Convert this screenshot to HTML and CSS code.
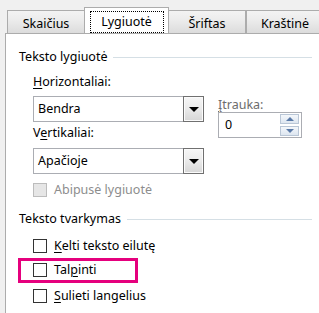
FILE: index.html
```html
<!DOCTYPE html>
<html>
  <head>
    <title>Lygiuotė</title>
    <link rel="stylesheet" href="styles.css">
  </head>
  <body>
    <div class="tabs">
      <div class="tab">Skaičius</div>
      <div class="tab tab-active"><span class="focus-box">Lygiuotė</span></div>
      <div class="tab">Šriftas</div>
      <div class="tab tab-last">Kraštinė</div>
    </div>
    <div class="panel">
      <div class="group-title">
        <span>Teksto lygiuotė</span>
        <div class="group-line"></div>
      </div>
      <div class="align-grid">
        <div class="align-left">
          <div class="label label-first"><u>H</u>orizontaliai:</div>
          <div class="combo">
            <span class="combo-text">Bendra</span>
            <div class="combo-button"><div class="arrow-down"></div></div>
          </div>
          <div class="label label-second">V<u>e</u>rtikaliai:</div>
          <div class="combo combo-second">
            <span class="combo-text">Apačioje</span>
            <div class="combo-button"><div class="arrow-down"></div></div>
          </div>
        </div>
        <div class="align-right">
          <div class="label label-disabled"><u>Į</u>trauka:</div>
          <div class="spin">
            <span class="spin-text">0</span>
            <div class="spin-buttons">
              <div class="spin-btn"><div class="spin-up"></div></div>
              <div class="spin-btn"><div class="spin-down"></div></div>
            </div>
          </div>
        </div>
      </div>
      <div class="check-row check-disabled">
        <div class="checkbox checkbox-disabled"></div>
        <span>Abipusė lygiuotė</span>
      </div>

      <div class="group-title group-second">
        <span>Teksto tvarkymas</span>
        <div class="group-line"></div>
      </div>
      <div class="check-list">
        <div class="check-row">
          <div class="checkbox"></div>
          <span><u>K</u>elti teksto eilutę</span>
        </div>
        <div class="check-row check-marked">
          <div class="checkbox"></div>
          <span>Tal<u>p</u>inti</span>
          <div class="highlight"></div>
        </div>
        <div class="check-row check-last">
          <div class="checkbox"></div>
          <span><u>S</u>ulieti langelius</span>
        </div>
      </div>
    </div>
  </body>
</html>
```

FILE: styles.css
```css
body {
  margin: 0;
  height: 313px;
  overflow: hidden;
  background-color: #f0f0f0;
  color: #000000;
  font-family: "Noto Sans", "Open Sans", sans-serif;
  font-size: 12.5px;
  line-height: 16px;
}

u {
  text-decoration-thickness: 1px;
  text-underline-offset: 2px;
}

/* Tab strip along the top */
.tabs {
  display: flex;
  align-items: flex-end;
  height: 23px;
  padding: 10px 0 0 7px;
  overflow: hidden;
}

.tab {
  box-sizing: border-box;
  width: 78px;
  height: 23px;
  padding-top: 5px;
  flex-shrink: 0;
  text-align: center;
  border: 1px solid #acacac;
  border-bottom: none;
  background: linear-gradient(#f3f3f3, #ebebeb 45%, #dcdcdc);
}

.tab-active {
  position: relative;
  z-index: 1;
  width: 85px;
  height: 27px;
  margin: 0 -1px -1px -1px;
  padding-top: 3px;
  background: #ffffff;
}

.tab-last {
  width: 78px;
}

.focus-box {
  display: inline-block;
  width: 72px;
  padding: 2px 0 2px 0;
  border: 1px dotted #000000;
}

/* White page under the tabs */
.panel {
  box-sizing: border-box;
  height: 280px;
  margin-left: 5px;
  padding: 15px 7px 0 13px;
  border-top: 1px solid #acacac;
  border-left: 1px solid #acacac;
  background: #ffffff;
}

.group-title {
  display: flex;
  align-items: center;
}

.group-line {
  flex: 1;
  margin-left: 6px;
  border-top: 1px solid #d5dfe5;
}

.group-second {
  margin-top: 13px;
}

.align-grid {
  display: flex;
  gap: 14px;
  padding-left: 14px;
}

.align-left {
  width: 171px;
}

.align-right {
  width: 84px;
  padding-top: 33px;
}

.label-first {
  margin-top: 9px;
}

.label-second {
  margin-top: 3px;
}

.label-disabled {
  color: #6d6d6d;
  line-height: 14px;
}

.combo {
  box-sizing: border-box;
  display: flex;
  align-items: center;
  height: 26px;
  margin-top: 6px;
  border: 1px solid #abadb3;
  background: #ffffff;
}

.combo-second {
  margin-top: 7px;
}

.combo-text {
  flex: 1;
  padding-left: 4px;
}

.combo-button {
  box-sizing: border-box;
  display: flex;
  align-items: center;
  justify-content: center;
  width: 21px;
  height: 26px;
  margin: -1px -1px -1px 0;
  border: 1px solid #707070;
  box-shadow: inset 0 0 0 1px #fbfbfb;
  background: linear-gradient(#f6f6f6, #eaeaea 50%, #d6d6d6);
}

.arrow-down {
  width: 0;
  height: 0;
  border-left: 5px solid transparent;
  border-right: 5px solid transparent;
  border-top: 5px solid #000000;
}

.spin {
  box-sizing: border-box;
  display: flex;
  align-items: center;
  height: 26px;
  border: 1px solid #abadb3;
}

.spin-text {
  flex: 1;
  padding-left: 6px;
}

.spin-buttons {
  display: flex;
  flex-direction: column;
  gap: 2px;
  margin-right: 2px;
}

.spin-btn {
  box-sizing: border-box;
  display: flex;
  align-items: center;
  justify-content: center;
  width: 19px;
  height: 10px;
  border: 1px solid #b9c6d6;
  background: linear-gradient(#f4f7fb, #dde6f0);
}

.spin-up {
  width: 0;
  height: 0;
  border-left: 4px solid transparent;
  border-right: 4px solid transparent;
  border-bottom: 4px solid #5a7aa8;
}

.spin-down {
  width: 0;
  height: 0;
  border-left: 4px solid transparent;
  border-right: 4px solid transparent;
  border-top: 4px solid #5a7aa8;
}

/* Checkboxes */
.check-row {
  position: relative;
  display: flex;
  align-items: center;
  gap: 7px;
  height: 16px;
  padding-left: 14px;
}

.check-disabled {
  margin-top: 8px;
  color: #8d8d8d;
}

.checkbox {
  box-sizing: border-box;
  width: 14px;
  height: 14px;
  border: 1px solid #333333;
  background: #ffffff;
}

.checkbox-disabled {
  border-color: #bcbcbc;
  background: #e6e6e6;
}

.check-list {
  display: flex;
  flex-direction: column;
  gap: 8px;
  margin-top: 11px;
}

.check-last {
  margin-top: 2px;
}

.highlight {
  position: absolute;
  left: -1px;
  top: -4px;
  width: 114px;
  height: 19px;
  border: 3px solid #e5007d;
}
```
